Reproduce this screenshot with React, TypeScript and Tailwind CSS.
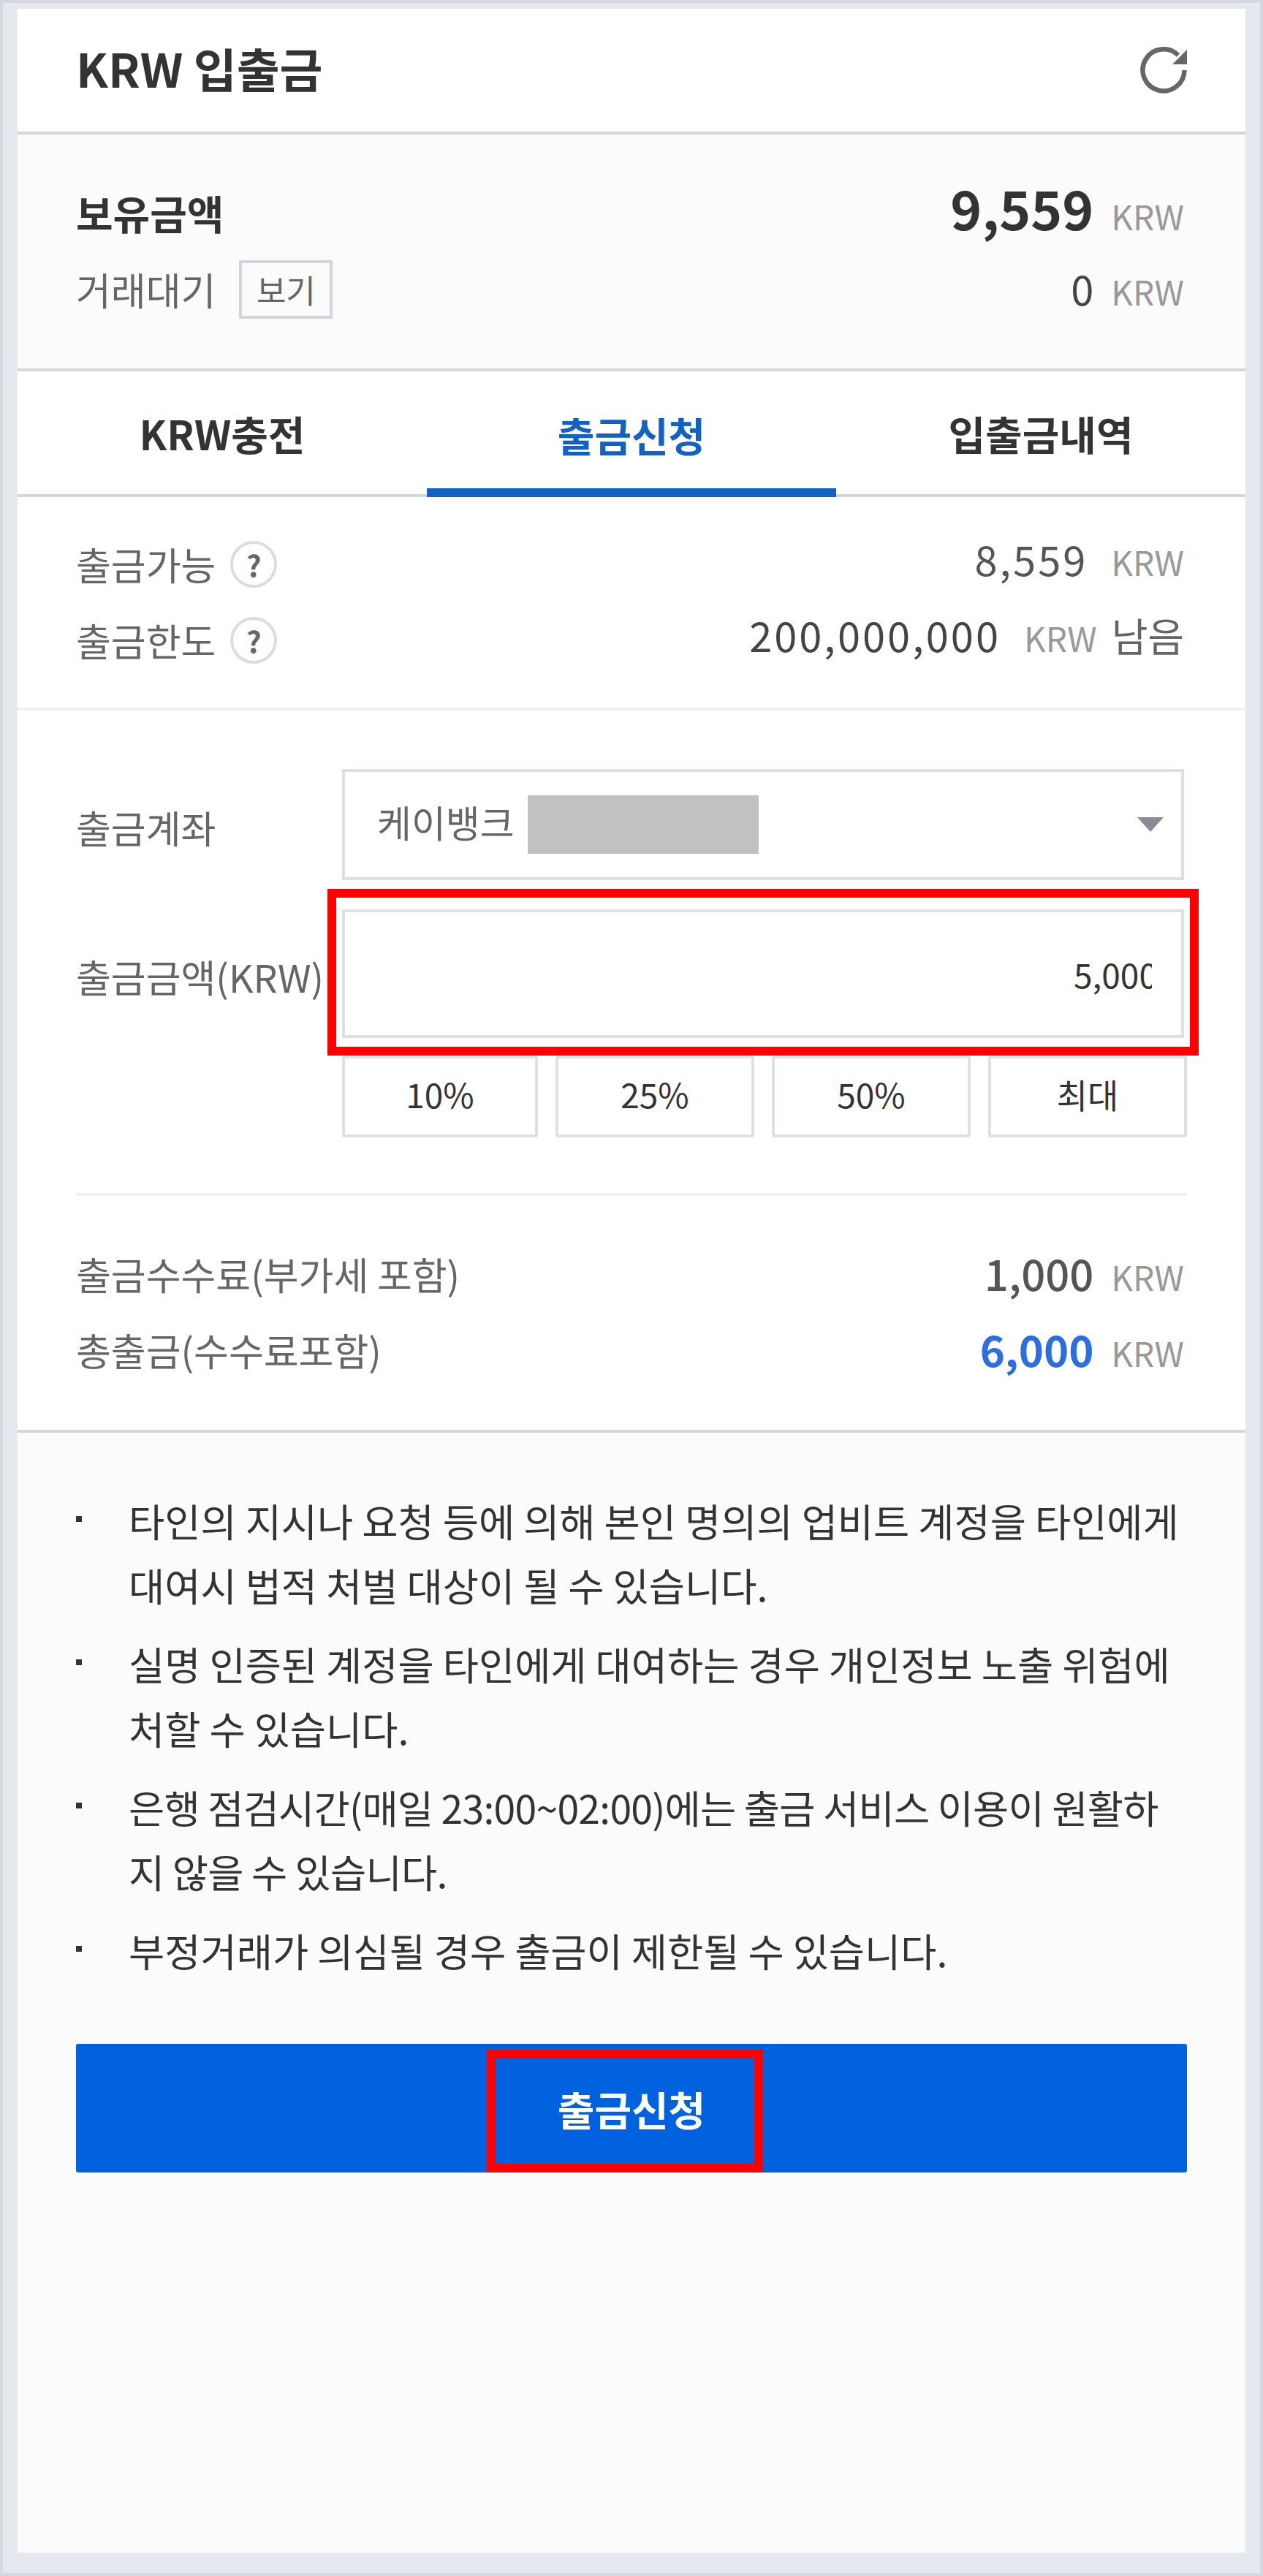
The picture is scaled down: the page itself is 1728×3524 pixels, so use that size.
import React from 'react';

const kr = "font-['Noto_Sans_CJK_KR','Noto_Sans',sans-serif]";

function Krw() {
  return <span className="ml-6 mr-1 text-[46px] font-normal tracking-normal text-[#999]">KRW</span>;
}

function Help() {
  return (
    <span className="ml-[20px] flex h-16 w-16 items-center justify-center rounded-full border-4 border-[#ddd] text-[40px] leading-none font-bold text-[#666]">
      ?
    </span>
  );
}

function Notice({ children }: { children: React.ReactNode }) {
  return (
    <li className="relative pl-[72px]">
      <span className="absolute left-0 top-[38px] h-2 w-2 bg-[#333]" />
      {children}
    </li>
  );
}

export default function App() {
  return (
    <div className={`h-[3524px] border-4 border-[#d5d8de] bg-[#e5e8ed] px-5 pb-7 pt-2 ${kr}`}>
      <div className="flex h-[3480px] flex-col bg-white">
        {/* Title */}
        <div className="flex h-[172px] items-center justify-between border-b-4 border-[#d4d4da] px-20">
          <h1 className="pb-2 text-[64px] font-bold text-[#333]">KRW 입출금</h1>
          <svg width="64" height="64" viewBox="0 0 64 64" fill="none" stroke="#666" strokeWidth="6.5">
            <path d="M60.5 32A28.5 28.5 0 1 1 52 11.5" />
            <path d="M64 4v20H44z" fill="#666" stroke="none" />
          </svg>
        </div>

        {/* Balance */}
        <div className="flex h-[324px] flex-col justify-center gap-[28px] border-b-4 border-[#d4d4da] bg-[#fbfbfb] px-20">
          <div className="flex h-[76px] items-center justify-between">
            <span className="text-[55px] font-bold text-[#333]">보유금액</span>
            <span className="flex items-baseline pb-3 text-[73px] font-bold text-[#333]">9,559<Krw /></span>
          </div>
          <div className="flex h-[80px] items-center justify-between">
            <span className="flex items-center text-[52px] text-[#666]">
              거래대기
              <span className="ml-8 flex h-20 w-32 items-center justify-center border-4 border-[#d4d4da] text-[44px]">보기</span>
            </span>
            <span className="flex items-baseline pb-1 text-[56px] text-[#444]">0<Krw /></span>
          </div>
        </div>

        {/* Tabs */}
        <div className="flex h-[172px] border-b-4 border-[#d4d4da] text-[55px] font-bold text-[#333]">
          <div className="flex flex-1 items-center justify-center">KRW충전</div>
          <div className="-mb-1 flex flex-1 items-center justify-center border-b-[12px] border-[#1261c4] pt-[12px] text-[#1261c4]">출금신청</div>
          <div className="flex flex-1 items-center justify-center">입출금내역</div>
        </div>

        {/* Limits */}
        <div className="flex h-[292px] flex-col gap-[40px] border-b-4 border-[#f1f1f4] px-20 pt-[60px] text-[52px] text-[#666]">
          <div className="flex h-[64px] items-center justify-between">
            <span className="flex items-center">출금가능<Help /></span>
            <span className="flex items-baseline pb-4 text-[56px] tracking-[3px] text-[#555]">8,559<span className="w-2" /><Krw /></span>
          </div>
          <div className="flex h-[64px] items-center justify-between">
            <span className="flex items-center">출금한도<Help /></span>
            <span className="flex items-baseline pb-4 pr-1 text-[56px] tracking-[3px] text-[#444]">
              200,000,000<span className="w-2" /><Krw />
              <span className="ml-4 text-[54px] tracking-normal text-[#666]">남음</span>
            </span>
          </div>
        </div>

        {/* Form */}
        <div className="flex flex-col px-20 pt-20 text-[52px] text-[#666]">
          <div className="flex items-center">
            <span className="w-[364px] pt-2">출금계좌</span>
            <div className="flex h-[152px] w-[1152px] items-center justify-between border-4 border-[#dfe0e6] pl-11 pr-[24px]">
              <span className="flex items-center text-[51px]">
                <span className="pb-2">케이뱅크</span>
                <span className="ml-[18px] h-20 w-[316px] bg-[#c1c1c1]" />
              </span>
              <span className="h-0 w-0 border-x-[18px] border-t-[20px] border-x-transparent border-t-[#888b93]" />
            </div>
          </div>
          <div className="relative mt-10 flex items-center">
            <span className="w-[364px] pt-2">출금금액(KRW)</span>
            <div className="flex h-[176px] w-[1152px] items-center justify-end border-4 border-[#dfe0e6] pr-10 text-[46px] text-[#333]">
              <span className="w-[107px] overflow-hidden whitespace-nowrap">5,000</span>
            </div>
            <div className="absolute left-[344px] top-[-28px] h-[228px] w-[1192px] border-[12px] border-[#ff0000]" />
          </div>
          <div className="mt-6 ml-[364px] flex gap-6 text-[46px] text-[#333]">
            <button className="h-[112px] w-[268px] rounded-[3px] border-4 border-[#dfe0e6] pb-2">10%</button>
            <button className="h-[112px] w-[272px] rounded-[3px] border-4 border-[#dfe0e6] pb-2">25%</button>
            <button className="h-[112px] w-[272px] rounded-[3px] border-4 border-[#dfe0e6] pb-2">50%</button>
            <button className="h-[112px] w-[272px] rounded-[3px] border-4 border-[#dfe0e6] pb-2">최대</button>
          </div>
          <div className="mt-[76px] h-1 bg-[#f1f1f4]" />
          <div className="mt-[76px] flex h-[66px] items-center justify-between">
            <span className="pb-1">출금수수료(부가세 포함)</span>
            <span className="flex items-baseline pb-2 text-[58px] font-medium text-[#555]">1,000<Krw /></span>
          </div>
          <div className="mt-[38px] flex h-[66px] items-center justify-between">
            <span className="pb-1">총출금(수수료포함)</span>
            <span className="flex items-baseline pb-2 text-[58px] font-bold text-[#2a6ee0]">6,000<Krw /></span>
          </div>
        </div>

        {/* Notices */}
        <div className="mt-[74px] flex-1 border-t-4 border-[#d4d4da] bg-[#fbfbfb] px-20 pt-[76px]">
          <ul className="flex flex-col gap-5 text-[53.5px] leading-[88px] text-[#333]">
            <Notice>타인의 지시나 요청 등에 의해 본인 명의의 업비트 계정을 타인에게 대여시 법적 처벌 대상이 될 수 있습니다.</Notice>
            <Notice>실명 인증된 계정을 타인에게 대여하는 경우 개인정보 노출 위험에 처할 수 있습니다.</Notice>
            <Notice>
              <span className="tracking-[-0.75px]">은행 점검시간(매일 23:00~02:00)에는 출금 서비스 이용이 원활하<br />지 않을 수 있습니다.</span>
            </Notice>
            <Notice>부정거래가 의심될 경우 출금이 제한될 수 있습니다.</Notice>
          </ul>
          <div className="relative mt-[84px]">
            <button className="h-[176px] w-full rounded-[3px] bg-[#0062df] text-[55px] font-bold text-white">출금신청</button>
            <div className="absolute bottom-0 left-[562px] h-[168px] w-[378px] border-[12px] border-[#ff0000]" />
          </div>
        </div>
      </div>
    </div>
  );
}
